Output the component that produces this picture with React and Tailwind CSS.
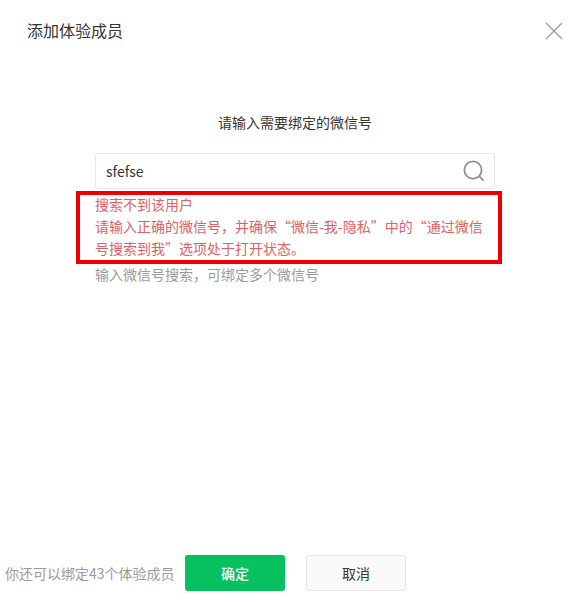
import { useState } from 'react';

const FONT = 'font-["Noto_Sans_CJK_SC","Open_Sans",sans-serif]';

function CloseIcon() {
  return (
    <svg width="18" height="18" viewBox="0 0 18 18" fill="none" stroke="#9a9a9a" strokeWidth="1.2">
      <path d="M1 1l16 16M17 1L1 17" />
    </svg>
  );
}

function SearchIcon() {
  return (
    <svg width="22" height="22" viewBox="0 0 22 22" fill="none" stroke="#8f8f8f" strokeWidth="1.8">
      <circle cx="10" cy="10" r="8.6" />
      <path d="M16.4 16.4l4.2 4.2" />
    </svg>
  );
}

// 弯引号要占满一个全角
function Quote({ children }) {
  return <span className="[font-feature-settings:'fwid']">{children}</span>;
}

export default function App() {
  const [wechatId, setWechatId] = useState('sfefse');

  return (
    <div className={`flex h-[602px] w-[583px] flex-col overflow-hidden bg-white ${FONT}`}>
      <div className="flex items-center justify-between pl-[27px] pr-[20px] pt-[20px]">
        <h1 className="text-[16px] leading-[21px] font-normal text-[#353535]">添加体验成员</h1>
        <CloseIcon />
      </div>

      <p className="ml-[95px] mt-[71px] w-[400px] text-center text-[14px] leading-[20px] text-[#353535]">请输入需要绑定的微信号</p>

      <div className="ml-[95px] mt-[21px] flex h-[36px] w-[400px] items-center justify-between rounded-[3px] border border-[#e7e7eb] pl-[10px] pr-[9px]">
        <input
          value={wechatId}
          onChange={e => setWechatId(e.target.value)}
          className="w-[300px] text-[14px] text-[#353535] outline-none"
        />
        <SearchIcon />
      </div>

      {/* 红框是截图上的标注 */}
      <div className="ml-[76px] mt-[2px] w-[426px] border-[4px] border-[#ee0000] pb-[1px] pl-[15px] pr-[10px] text-[14px] leading-[22px] text-[#e15f63]">
        <p className="-mt-[2px]">搜索不到该用户</p>
        <p>
          请输入正确的微信号，并确保<Quote>“</Quote>微信-我-隐私<Quote>”</Quote>中的<Quote>“</Quote>通过微信<br />
          号搜索到我<Quote>”</Quote>选项处于打开状态。
        </p>
      </div>

      <p className="ml-[95px] text-[14px] leading-[20px] text-[#9a9a9a]">输入微信号搜索，可绑定多个微信号</p>

      <div className="mt-auto mb-[11px] flex items-center pl-[5px]">
        <span className="w-[180px] text-[14px] text-[#9a9a9a]">你还可以绑定43个体验成员</span>
        <button className="h-[36px] w-[100px] rounded-[3px] bg-[#07c160] text-[14px] font-medium text-white">确定</button>
        <button className="ml-[21px] h-[36px] w-[100px] rounded-[3px] border border-[#e7e7eb] bg-[#fafafa] text-[14px] text-[#353535]">取消</button>
      </div>
    </div>
  );
}
